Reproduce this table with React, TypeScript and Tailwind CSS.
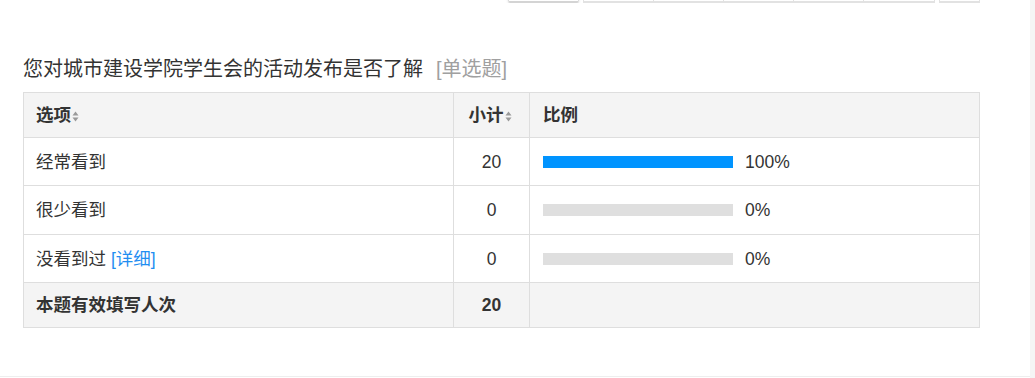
import React from 'react';

type Row = { label: string; count: number; pct: number; detail?: boolean };

const rows: Row[] = [
  { label: '经常看到', count: 20, pct: 100 },
  { label: '很少看到', count: 0, pct: 0 },
  { label: '没看到过', count: 0, pct: 0, detail: true },
];

function SortIcon() {
  return (
    <svg width="7" height="11" viewBox="0 0 7 11" className="ml-[1px] inline-block align-middle">
      <path d="M3.5 0.5 L6.5 4.5 L0.5 4.5 Z" fill="#9a9a9a" />
      <path d="M3.5 10.5 L6.5 6.5 L0.5 6.5 Z" fill="#9a9a9a" />
    </svg>
  );
}

export default function App() {
  const font = { fontFamily: '"Liberation Sans", Arial, "Noto Sans CJK SC", sans-serif' };

  return (
    <div className="flex w-[1035px] h-[378px] bg-white text-[#333]" style={font}>
      <div className="w-[1030px] h-[377px] border-b border-[#eeeeee] bg-white">
        {/* toolbar buttons, scrolled mostly out of view */}
        <div className="h-[3px] overflow-hidden flex items-end">
          <div className="ml-[508px] w-[71px] h-[30px] border border-[#dcdcdc] border-b-2 border-b-[#d4d4d4] rounded-b-[2px] shadow-sm" />
          <div className="ml-[4px] flex h-[30px] border border-[#e2e2e2] border-b-2">
            <div className="w-[70px] border-r border-[#e2e2e2]" />
            <div className="w-[70px] border-r border-[#e2e2e2]" />
            <div className="w-[70px] border-r border-[#e2e2e2]" />
            <div className="w-[70px] border-r border-[#e2e2e2]" />
            <div className="w-[70px]" />
          </div>
          <div className="ml-[4px] w-[41px] h-[30px] border border-[#e2e2e2] border-b-2" />
        </div>

        <div className="pl-[23px] pt-[54px]">
          <div className="flex items-center h-[24px] text-[20px] leading-[24px] text-[#333]">
            <span>您对城市建设学院学生会的活动发布是否了解</span>
            <span className="ml-[13px] text-[#a0a0a0]">[单选题]</span>
          </div>

          <table className="mt-[11px] w-[957px] border-collapse text-[17.5px] leading-[22px]">
            <thead>
              <tr className="h-[45px] bg-[#f4f4f4]">
                <th className="w-[430px] border border-[#dedede] pl-[12px] text-left font-bold">
                  选项<SortIcon />
                </th>
                <th className="w-[76px] border border-[#dedede] pr-[3px] text-center font-bold">
                  小计<SortIcon />
                </th>
                <th className="border border-[#dedede] pl-[13px] text-left font-bold">比例</th>
              </tr>
            </thead>
            <tbody>
              {rows.map((r, i) => (
                <tr key={r.label} className={i === 1 ? 'h-[49px]' : 'h-[48px]'}>
                  <td className="border border-[#dedede] pl-[12px]">
                    {r.label}
                    {r.detail && <span className="ml-[5px] text-[#1f8ef1]">[详细]</span>}
                  </td>
                  <td className="border border-[#dedede] text-center">{r.count}</td>
                  <td className="border border-[#dedede] pl-[13px]">
                    <div className="flex items-center">
                      <div className="w-[190px] h-[12px] bg-[#dfdfdf]">
                        <div className="h-full bg-[#0094ff]" style={{ width: `${r.pct}%` }} />
                      </div>
                      <span className="ml-[12px]">{r.pct}%</span>
                    </div>
                  </td>
                </tr>
              ))}
              <tr className="h-[45px] bg-[#f4f4f4] font-bold">
                <td className="border border-[#dedede] pl-[12px]">本题有效填写人次</td>
                <td className="border border-[#dedede] text-center">20</td>
                <td className="border border-[#dedede]" />
              </tr>
            </tbody>
          </table>
        </div>
      </div>
      <div className="w-[5px] h-full bg-[#f5f5f5]" />
    </div>
  );
}
